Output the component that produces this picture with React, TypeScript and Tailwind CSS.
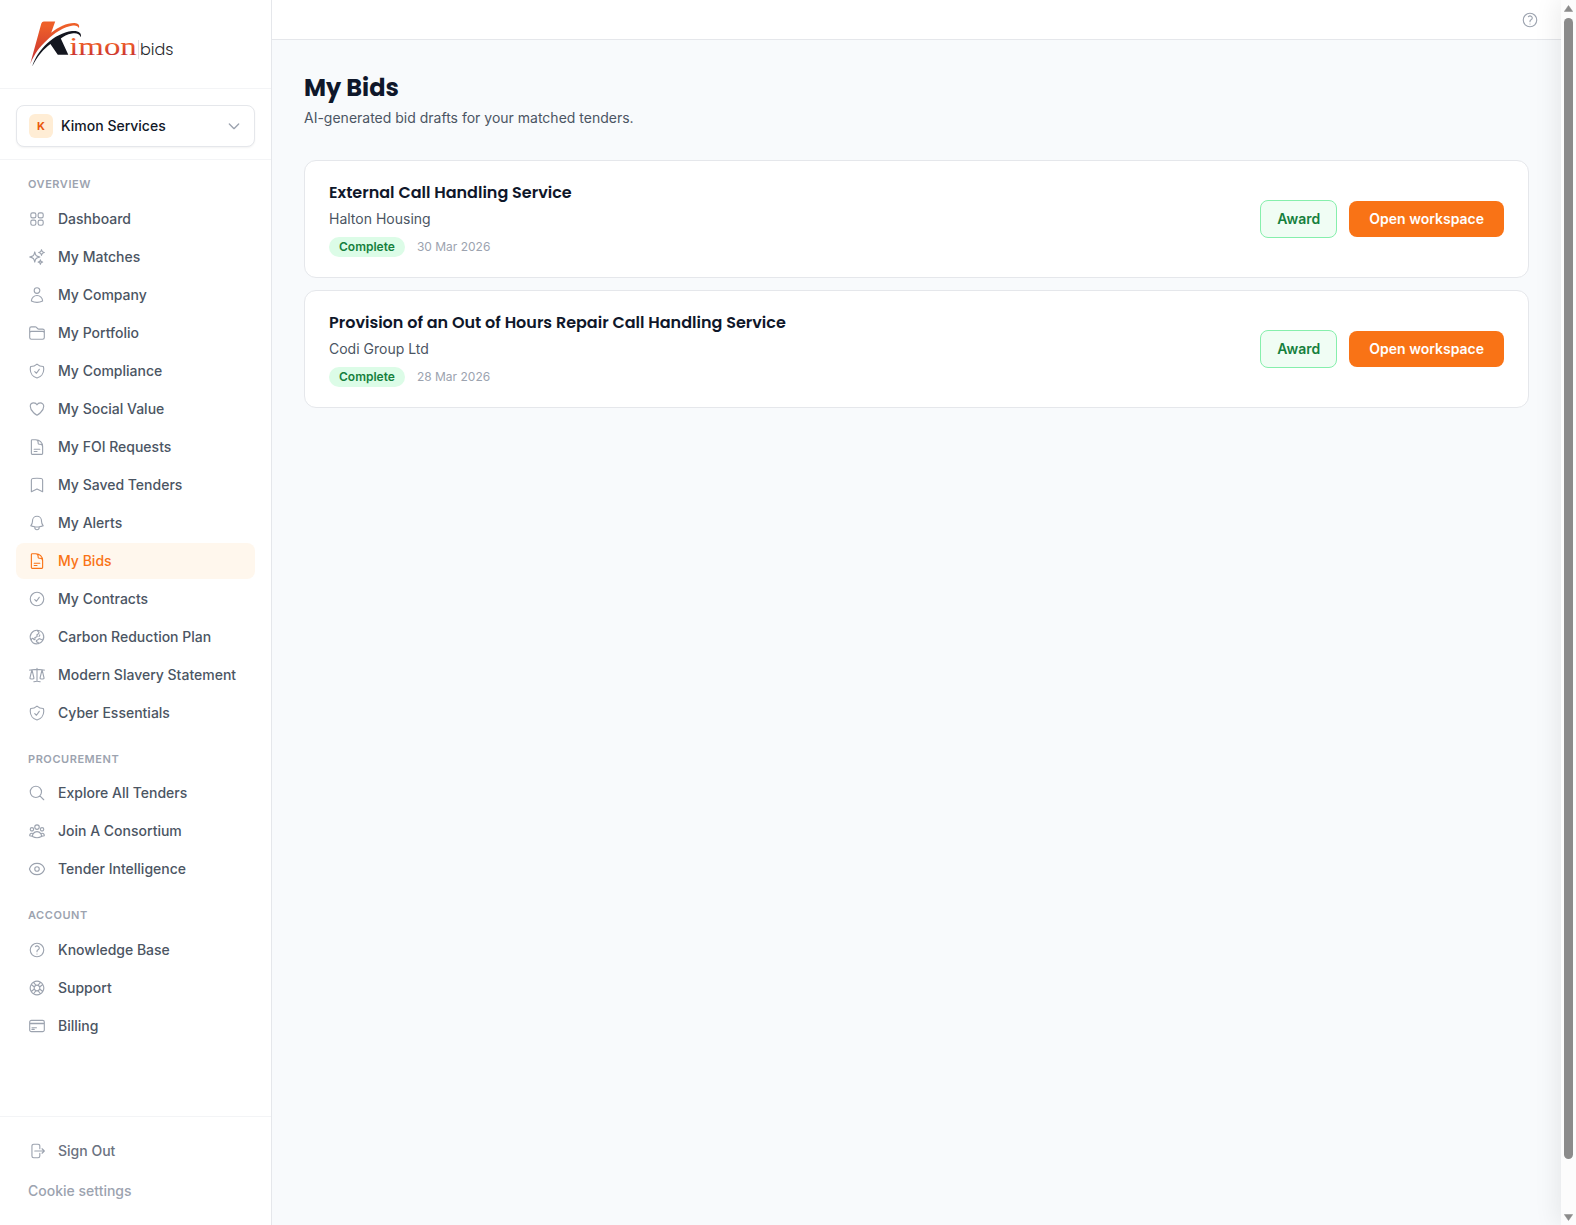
import type { IconType } from 'react-icons';
import {
  HiOutlineSquares2X2, HiOutlineSparkles, HiOutlineUser, HiOutlineFolder, HiOutlineShieldCheck,
  HiOutlineHeart, HiOutlineDocumentText, HiOutlineBookmark, HiOutlineBell, HiOutlineCheckCircle,
  HiOutlineGlobeAsiaAustralia, HiOutlineScale, HiOutlineMagnifyingGlass, HiOutlineUserGroup,
  HiOutlineEye, HiOutlineQuestionMarkCircle, HiOutlineLifebuoy, HiOutlineCreditCard,
  HiOutlineArrowRightOnRectangle,
} from 'react-icons/hi2';

type NavItem = { label: string; icon: IconType; active?: boolean };
type NavGroup = { title: string; items: NavItem[] };

const groups: NavGroup[] = [
  {
    title: 'OVERVIEW',
    items: [
      { label: 'Dashboard', icon: HiOutlineSquares2X2 },
      { label: 'My Matches', icon: HiOutlineSparkles },
      { label: 'My Company', icon: HiOutlineUser },
      { label: 'My Portfolio', icon: HiOutlineFolder },
      { label: 'My Compliance', icon: HiOutlineShieldCheck },
      { label: 'My Social Value', icon: HiOutlineHeart },
      { label: 'My FOI Requests', icon: HiOutlineDocumentText },
      { label: 'My Saved Tenders', icon: HiOutlineBookmark },
      { label: 'My Alerts', icon: HiOutlineBell },
      { label: 'My Bids', icon: HiOutlineDocumentText, active: true },
      { label: 'My Contracts', icon: HiOutlineCheckCircle },
      { label: 'Carbon Reduction Plan', icon: HiOutlineGlobeAsiaAustralia },
      { label: 'Modern Slavery Statement', icon: HiOutlineScale },
      { label: 'Cyber Essentials', icon: HiOutlineShieldCheck },
    ],
  },
  {
    title: 'PROCUREMENT',
    items: [
      { label: 'Explore All Tenders', icon: HiOutlineMagnifyingGlass },
      { label: 'Join A Consortium', icon: HiOutlineUserGroup },
      { label: 'Tender Intelligence', icon: HiOutlineEye },
    ],
  },
  {
    title: 'ACCOUNT',
    items: [
      { label: 'Knowledge Base', icon: HiOutlineQuestionMarkCircle },
      { label: 'Support', icon: HiOutlineLifebuoy },
      { label: 'Billing', icon: HiOutlineCreditCard },
    ],
  },
];

const bids = [
  { title: 'External Call Handling Service', buyer: 'Halton Housing', date: '30 Mar 2026' },
  { title: 'Provision of an Out of Hours Repair Call Handling Service', buyer: 'Codi Group Ltd', date: '28 Mar 2026' },
];

function Logo() {
  return (
    <svg width="150" height="52" viewBox="28 18 150 52" aria-label="Kimon bids">
      <defs>
        <linearGradient id="flame" x1="0" y1="0" x2="0" y2="1">
          <stop offset="0.1" stopColor="#ee5f29" />
          <stop offset="1" stopColor="#c52f33" />
        </linearGradient>
        <linearGradient id="word" x1="0" y1="0" x2="0" y2="1">
          <stop offset="0.35" stopColor="#f0622a" />
          <stop offset="0.8" stopColor="#cb3430" />
        </linearGradient>
      </defs>
      <path d="M41.3 23.4Q42 21.6 43.9 21.6H55.2L51.2 32.8C58.4 26.8 67 22.8 74.6 23C78.2 23.2 80 25.2 78.9 28.2C78.2 26 76 25.2 73 25.5C64 26.6 54 33.2 46.6 40.4C39.5 47 34.5 53.5 30.2 64Z" fill="url(#flame)" />
      <path d="M32.2 66.5C37.5 49.5 54 33.4 72 31C78.4 30.4 82 32.8 80.8 37.2C79.6 33.8 76.5 32.6 72 33.4C67 34.2 63.5 36.2 60.8 38.6L68.3 54.8H57.8L50.4 44C43.5 49 37.5 56 32.2 66.5Z" fill="#14161f" />
      <text x="69.2" y="55" textLength="67.6" lengthAdjust="spacingAndGlyphs" fill="url(#word)" className="font-['Liberation_Serif',serif] text-[26px]">imon</text>
      <path d="M138.5 40V59" stroke="#dddee1" strokeWidth="1" />
      <text x="140" y="55" textLength="33.5" lengthAdjust="spacingAndGlyphs" fill="#26272c" className="font-[Poppins,Inter,sans-serif] text-[16px] font-light">bids</text>
    </svg>
  );
}

function NavRow({ label, icon: Icon, active }: NavItem) {
  return (
    <a className={`flex h-9 items-center gap-3 rounded-lg px-3 text-sm font-medium ${active ? 'bg-[#fff7ed] text-[#f97316]' : 'text-[#4b5563]'}`}>
      <Icon className={`size-[18px] shrink-0 ${active ? 'text-[#f97316]' : 'text-[#9ca3af]'}`} />
      {label}
    </a>
  );
}

function Sidebar() {
  return (
    <aside className="flex w-[272px] shrink-0 flex-col border-r border-[#e5e7eb] bg-white">
      <div className="flex h-[89px] shrink-0 items-center border-b border-[#f3f4f6] px-7">
        <Logo />
      </div>
      <div className="border-b border-[#f3f4f6] px-4 pt-4 pb-3">
        <button className="flex h-[42px] w-full items-center gap-2 rounded-lg border border-[#e5e7eb] bg-white px-3 shadow-xs">
          <span className="flex size-6 items-center justify-center rounded-md bg-[#ffedd5] text-[11px] font-bold text-[#ea580c]">K</span>
          <span className="flex-1 text-left text-sm font-medium text-[#111827]">Kimon Services</span>
          <svg className="size-4 text-[#9ca3af]" viewBox="0 0 24 24" fill="none" stroke="currentColor" strokeWidth="2" strokeLinecap="round" strokeLinejoin="round">
            <path d="m19 9-7 7-7-7" />
          </svg>
        </button>
      </div>
      <nav className="flex flex-1 flex-col gap-5 px-4 pt-4">
        {groups.map((group) => (
          <div key={group.title}>
            <p className="mb-2 px-3 text-[11px] leading-[16.5px] font-semibold tracking-[0.55px] text-[#9ca3af]">{group.title}</p>
            <div className="flex flex-col gap-0.5">
              {group.items.map((item) => <NavRow key={item.label} {...item} />)}
            </div>
          </div>
        ))}
      </nav>
      <div className="flex flex-col gap-1 border-t border-[#f3f4f6] p-4">
        <a className="flex h-9 items-center gap-3 px-3 text-sm font-medium text-[#6b7280]">
          <HiOutlineArrowRightOnRectangle className="size-[18px] text-[#9ca3af]" />
          Sign Out
        </a>
        <a className="flex h-9 items-center px-3 text-sm font-medium text-[#9ca3af]">Cookie settings</a>
      </div>
    </aside>
  );
}

function BidCard({ bid }: { bid: (typeof bids)[number] }) {
  return (
    <article className="flex items-center justify-between rounded-xl border border-[#e5e7eb] bg-white px-6 py-5">
      <div>
        <h2 className="font-[Poppins,Inter,sans-serif] text-base font-semibold text-[#0f172a]">{bid.title}</h2>
        <p className="mt-1 text-sm text-[#4b5563]">{bid.buyer}</p>
        <div className="mt-2 flex items-center gap-3 text-xs">
          <span className="flex h-5 items-center rounded-full bg-[#dcfce7] px-2.5 font-semibold text-[#15803d]">Complete</span>
          <span className="text-[#9ca3af]">{bid.date}</span>
        </div>
      </div>
      <div className="flex items-center gap-3 text-sm font-semibold">
        <button className="h-[38px] rounded-lg border border-[#86efac] bg-[#f0fdf4] px-4 text-[#15803d]">Award</button>
        <button className="h-9 rounded-lg bg-[#f97316] px-5 text-white">Open workspace</button>
      </div>
    </article>
  );
}

function Scrollbar() {
  return (
    <div className="flex w-[15px] shrink-0 flex-col items-center bg-[#fcfcfc]">
      <svg className="mt-[5px]" width="9" height="7" viewBox="0 0 9 7"><path d="M4.5 0.5 8.7 6.5H0.3Z" fill="#8b8b8b" stroke="#8b8b8b" strokeWidth="0.5" strokeLinejoin="round" /></svg>
      <div className="mt-1.5 h-[1141px] w-[9px] rounded-full bg-[#8b8b8b]" />
      <svg className="mt-auto mb-1" width="9" height="7" viewBox="0 0 9 7"><path d="M4.5 6.5 8.7 0.5H0.3Z" fill="#8b8b8b" stroke="#8b8b8b" strokeWidth="0.5" strokeLinejoin="round" /></svg>
    </div>
  );
}

export default function App() {
  return (
    <div className="flex h-[1225px] w-[1576px] overflow-hidden bg-[#f9fafb] font-[Inter,sans-serif]">
      <Sidebar />
      <div className="relative min-w-0 flex-1 overflow-hidden bg-[#f8fafc]">
        <header className="flex h-10 items-center justify-end border-b border-[#e5e7eb] bg-white pr-[22px]">
          <HiOutlineQuestionMarkCircle className="size-[18px] text-[#9ca3af]" />
        </header>
        <main className="p-8">
          <h1 className="font-[Poppins,Inter,sans-serif] text-2xl leading-8 font-bold text-[#0f172a]">My Bids</h1>
          <p className="mt-1 text-sm text-[#4b5563]">AI-generated bid drafts for your matched tenders.</p>
          <div className="mt-8 flex flex-col gap-3">
            {bids.map((bid) => <BidCard key={bid.title} bid={bid} />)}
          </div>
        </main>
        <div className="absolute inset-y-0 left-full w-10 shadow-[-4px_0_24px_rgba(0,0,0,0.08)]" />
      </div>
      <Scrollbar />
    </div>
  );
}
